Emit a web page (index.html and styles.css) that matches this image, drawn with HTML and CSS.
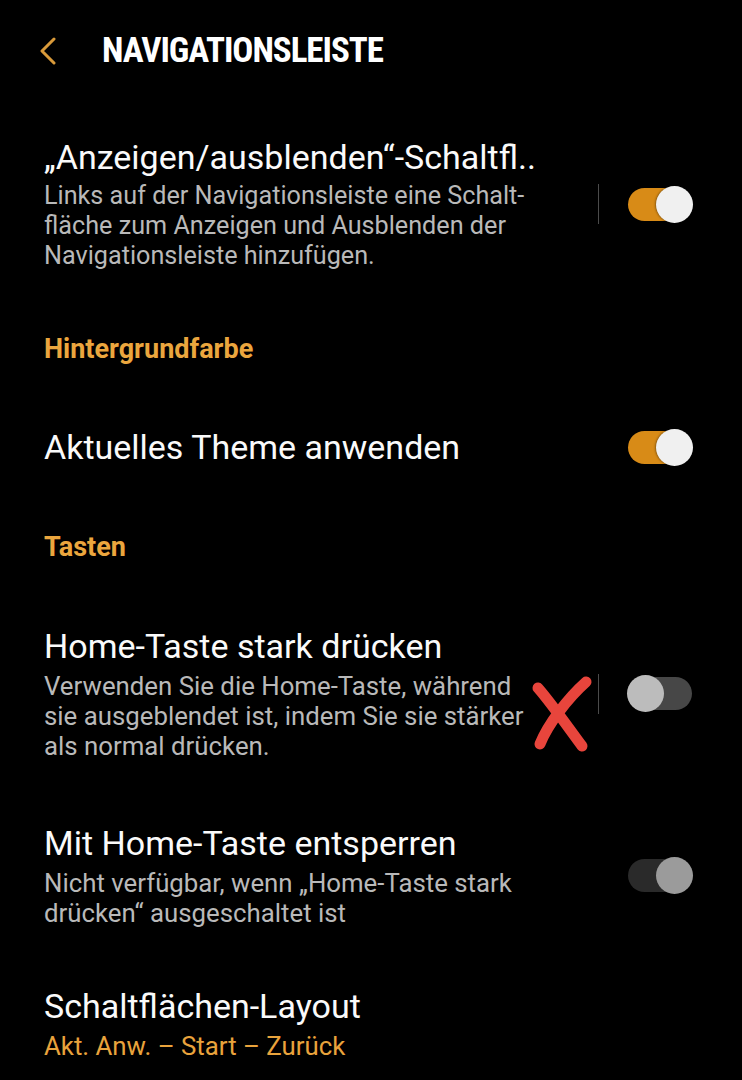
FILE: index.html
```html
<!DOCTYPE html>
<html lang="de">
<head>
<meta charset="utf-8">
<title>Navigationsleiste</title>
<link rel="stylesheet" href="styles.css">
</head>
<body>
<div class="screen">
	<div class="topbar">
		<svg class="back" width="18" height="28" viewBox="0 0 18 28"><polyline points="15,2 3,14 15,26" fill="none" stroke="#d99a3a" stroke-width="3" stroke-linecap="round" stroke-linejoin="round"/></svg>
		<h1>NAVIGATIONSLEISTE</h1>
	</div>
	<ul class="list">
		<li class="item first">
			<div class="txt">
				<div class="tit">„Anzeigen/ausblenden“-Schaltfl..</div>
				<div class="desc">Links auf der Navigationsleiste eine Schalt-<br>fläche zum Anzeigen und Ausblenden der<br>Navigationsleiste hinzufügen.</div>
			</div>
			<span class="sep"></span>
			<span class="switch on"><i></i></span>
		</li>
		<li class="group">Hintergrundfarbe</li>
		<li class="item">
			<div class="txt">
				<div class="tit">Aktuelles Theme anwenden</div>
			</div>
			<span class="switch on"><i></i></span>
		</li>
		<li class="group keys">Tasten</li>
		<li class="item press">
			<div class="txt">
				<div class="tit">Home-Taste stark drücken</div>
				<div class="desc">Verwenden Sie die Home-Taste, während<br>sie ausgeblendet ist, indem Sie sie stärker<br>als normal drücken.</div>
			</div>
			<span class="sep"></span>
			<span class="switch"><i></i></span>
			<svg class="mark" width="64" height="80" viewBox="0 0 64 80"><path d="M8 14 C22 30 40 56 52 72" fill="none" stroke="#e8453c" stroke-width="11" stroke-linecap="round"/><path d="M56 8 C38 24 18 50 10 70" fill="none" stroke="#e8453c" stroke-width="11" stroke-linecap="round"/></svg>
		</li>
		<li class="item unlock">
			<div class="txt">
				<div class="tit">Mit Home-Taste entsperren</div>
				<div class="desc">Nicht verfügbar, wenn „Home-Taste stark<br>drücken“ ausgeschaltet ist</div>
			</div>
			<span class="switch off"><i></i></span>
		</li>
		<li class="item last">
			<div class="txt">
				<div class="tit">Schaltflächen-Layout</div>
				<div class="desc val">Akt. Anw. – Start – Zurück</div>
			</div>
		</li>
	</ul>
</div>
</body>
</html>
```

FILE: styles.css
```css
*{margin:0;padding:0;border:0;list-style:none;}
body{background:#000;font-family:Roboto,"Noto Sans",sans-serif;color:#fafafa;}
.screen{width:742px;min-height:1080px;overflow:hidden;}
.topbar{display:flex;align-items:center;height:50px;padding:26px 0 0 39px;}
.topbar .back{display:block;}
.topbar h1{margin-left:45px;font-family:"Roboto Condensed",Roboto,sans-serif;font-weight:700;font-size:35px;line-height:50px;color:#fff;letter-spacing:-1.05px;}
.list{display:flex;flex-direction:column;gap:63px;padding:61px 49px 0 44px;}
.item{display:flex;align-items:center;position:relative;}
.item.press{margin-top:1px;}
.item.unlock{margin-top:-1px;}
.item.last{margin-top:-5px;}
.txt{flex:1;min-width:0;}
.tit{font-size:34px;line-height:40px;white-space:nowrap;color:#fafafa;}
.desc{margin-top:5px;font-size:25.8px;line-height:30px;color:#b9b9b9;white-space:nowrap;}
.first .desc{margin-top:4px;font-size:25.2px;}
.desc.val{color:#e9a33c;}
.group{font-size:27px;line-height:30px;font-weight:700;color:#eba63e;}
.group.keys{margin-top:2px;}
.sep{width:1px;height:40px;background:#4b4b4b;margin-right:28px;}
.switch{display:flex;align-items:center;justify-content:flex-start;width:64px;height:33px;border-radius:17px;background:#474747;margin:2px 1px;}
.switch i{display:block;width:37px;height:37px;border-radius:50%;margin:0 -1px;background:#bcbcbc;}
.switch.on{background:#d88b17;justify-content:flex-end;}
.switch.on i{background:#f0f0f0;box-shadow:-1px 0 2px rgba(0,0,0,.35);}
.switch.off{background:#2a2a2a;justify-content:flex-end;}
.switch.off i{background:#9b9b9b;}
.mark{position:absolute;left:486px;top:48px;}
```
